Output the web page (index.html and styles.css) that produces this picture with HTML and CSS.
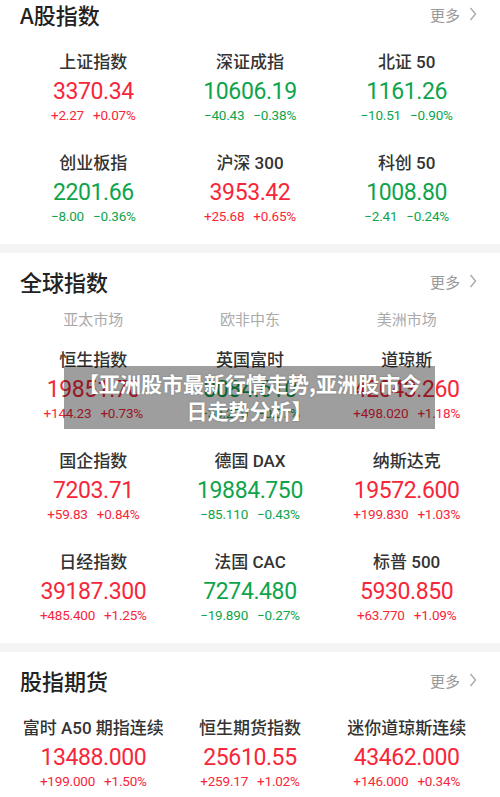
FILE: index.html
```html
<!DOCTYPE html>
<html lang="zh-CN">
<head>
  <meta charset="UTF-8" />
  <title>行情 - 指数</title>
  <link rel="stylesheet" href="styles.css">
</head>
<body>
  <div class="section first">
    <div class="head">
      <h2>A股指数</h2>
      <a class="more">更多
        <svg width="8" height="14" viewBox="0 0 8 14"><path d="M1.5 1 L6.5 7 L1.5 13" fill="none" stroke="#aaa" stroke-width="1.4"/></svg>
      </a>
    </div>
    <div class="grid">
      <div class="cell up"><div class="name">上证指数</div><div class="val">3370.34</div><div class="chg"><span>+2.27</span><span>+0.07%</span></div></div>
      <div class="cell down"><div class="name">深证成指</div><div class="val">10606.19</div><div class="chg"><span>−40.43</span><span>−0.38%</span></div></div>
      <div class="cell down"><div class="name">北证 50</div><div class="val">1161.26</div><div class="chg"><span>−10.51</span><span>−0.90%</span></div></div>
      <div class="cell down"><div class="name">创业板指</div><div class="val">2201.66</div><div class="chg"><span>−8.00</span><span>−0.36%</span></div></div>
      <div class="cell up"><div class="name">沪深 300</div><div class="val">3953.42</div><div class="chg"><span>+25.68</span><span>+0.65%</span></div></div>
      <div class="cell down"><div class="name">科创 50</div><div class="val">1008.80</div><div class="chg"><span>−2.41</span><span>−0.24%</span></div></div>
    </div>
  </div>

  <div class="section">
    <div class="head">
      <h2>全球指数</h2>
      <a class="more">更多
        <svg width="8" height="14" viewBox="0 0 8 14"><path d="M1.5 1 L6.5 7 L1.5 13" fill="none" stroke="#aaa" stroke-width="1.4"/></svg>
      </a>
    </div>
    <div class="tabs"><span>亚太市场</span><span>欧非中东</span><span>美洲市场</span></div>
    <div class="grid">
      <div class="cell up"><div class="name">恒生指数</div><div class="val">19851.70</div><div class="chg"><span>+144.23</span><span>+0.73%</span></div></div>
      <div class="cell down"><div class="name">英国富时</div><div class="val">8084.610</div><div class="chg"><span>−30.270</span><span>−0.37%</span></div></div>
      <div class="cell up"><div class="name">道琼斯</div><div class="val">42043.260</div><div class="chg"><span>+498.020</span><span>+1.18%</span></div></div>
      <div class="cell up"><div class="name">国企指数</div><div class="val">7203.71</div><div class="chg"><span>+59.83</span><span>+0.84%</span></div></div>
      <div class="cell down"><div class="name">德国 DAX</div><div class="val">19884.750</div><div class="chg"><span>−85.110</span><span>−0.43%</span></div></div>
      <div class="cell up"><div class="name">纳斯达克</div><div class="val">19572.600</div><div class="chg"><span>+199.830</span><span>+1.03%</span></div></div>
      <div class="cell up"><div class="name">日经指数</div><div class="val">39187.300</div><div class="chg"><span>+485.400</span><span>+1.25%</span></div></div>
      <div class="cell down"><div class="name">法国 CAC</div><div class="val">7274.480</div><div class="chg"><span>−19.890</span><span>−0.27%</span></div></div>
      <div class="cell up"><div class="name">标普 500</div><div class="val">5930.850</div><div class="chg"><span>+63.770</span><span>+1.09%</span></div></div>
    </div>
    <div class="banner">【亚洲股市最新行情走势,亚洲股市今日走势分析】</div>
  </div>

  <div class="section">
    <div class="head">
      <h2>股指期货</h2>
      <a class="more">更多
        <svg width="8" height="14" viewBox="0 0 8 14"><path d="M1.5 1 L6.5 7 L1.5 13" fill="none" stroke="#aaa" stroke-width="1.4"/></svg>
      </a>
    </div>
    <div class="grid">
      <div class="cell up"><div class="name">富时 A50 期指连续</div><div class="val">13488.000</div><div class="chg"><span>+199.000</span><span>+1.50%</span></div></div>
      <div class="cell up"><div class="name">恒生期货指数</div><div class="val">25610.55</div><div class="chg"><span>+259.17</span><span>+1.02%</span></div></div>
      <div class="cell up"><div class="name">迷你道琼斯连续</div><div class="val">43462.000</div><div class="chg"><span>+146.000</span><span>+0.34%</span></div></div>
    </div>
  </div>
</body>
</html>
```

FILE: styles.css
```css
html { overflow: hidden; }
body {
  margin: 0;
  background: #f4f4f4;
  font-family: Roboto, "Noto Sans CJK SC", sans-serif;
  color: #333;
}
.section {
  position: relative;
  background: #fff;
  padding-bottom: 21px;
  margin-bottom: 9px;
}
.head {
  display: flex;
  justify-content: space-between;
  align-items: center;
  height: 28px;
  padding: 14px 23px 0 20px;
}
.first .head { padding-top: 0; }
.head h2 {
  margin: 0;
  font-size: 22px;
  font-weight: 500;
  color: #222;
  font-family: "Noto Sans CJK SC", sans-serif;
}
.more {
  display: flex;
  align-items: center;
  gap: 9px;
  font-size: 15px;
  color: #999;
  font-family: "Noto Sans CJK SC", sans-serif;
}
.tabs {
  display: grid;
  grid-template-columns: repeat(3, 1fr);
  padding: 16px 15px 21px;
  line-height: 16px;
  font-size: 15px;
  color: #aaa;
  text-align: center;
  font-family: "Noto Sans CJK SC", sans-serif;
}
.grid {
  display: grid;
  grid-template-columns: repeat(3, 1fr);
  row-gap: 29px;
  padding: 0 15px;
  margin-top: 22px;
}
.tabs + .grid { margin-top: 0; }
.cell { text-align: center; }
.name {
  font-size: 17px;
  line-height: 24px;
  font-weight: 500;
  color: #333;
  white-space: nowrap;
}
.val {
  padding-top: 1px;
  font-size: 23px;
  line-height: 33px;
  letter-spacing: -0.4px;
}
.chg {
  display: flex;
  justify-content: center;
  gap: 9px;
  font-size: 13.5px;
  line-height: 14px;
  letter-spacing: -0.2px;
}
.up { color: #f7263a; }
.down { color: #0ea44c; }
.up .name, .down .name { color: #333; }
.banner {
  position: absolute;
  top: 113px;
  left: 64px;
  width: 347px;
  padding: 4px 12px 5px;
  background: rgba(0, 0, 0, 0.38);
  color: #fff;
  font-size: 21px;
  line-height: 27px;
  font-weight: 700;
  text-align: center;
  font-family: "Noto Sans CJK SC", sans-serif;
  text-shadow: 0 0 2px rgba(0, 0, 0, 0.25);
}
```
